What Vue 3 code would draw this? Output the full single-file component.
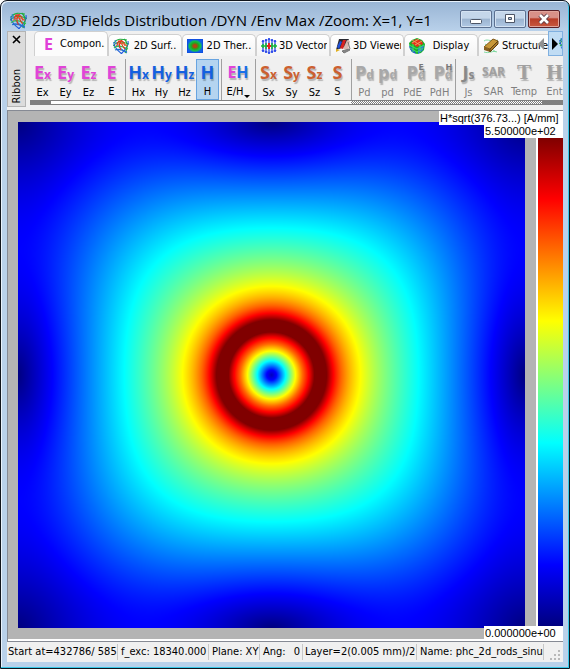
<template>
  <div class="window">
    <header class="title-bar">
      <MeshIcon class="app-icon" />
      <h1 class="title">2D/3D Fields Distribution /DYN /Env Max /Zoom: X=1, Y=1</h1>
      <div class="window-buttons">
        <button type="button" class="window-button" aria-label="Minimize">
          <svg width="14" height="14" viewBox="0 0 14 14"><rect x="1.5" y="7.5" width="11" height="4" rx="1" fill="#fff" stroke="#4c5566" /></svg>
        </button>
        <button type="button" class="window-button" aria-label="Maximize">
          <svg width="14" height="14" viewBox="0 0 14 14"><path d="M2.500 2.500h9v8h-9z M5.500 5.500v2h3v-2z" fill="#fff" fill-rule="evenodd" stroke="#4c5566" /></svg>
        </button>
        <button type="button" class="window-button close" aria-label="Close">
          <svg width="14" height="14" viewBox="0 0 14 14"><path d="M3 3l8 8M11 3l-8 8" stroke="#5b3a44" stroke-width="4.500" /><path d="M3 3l8 8M11 3l-8 8" stroke="#fff" stroke-width="2.600" /></svg>
        </button>
      </div>
    </header>

    <main class="client">
      <section class="ribbon">
        <div class="ribbon-grip">
          <button type="button" class="ribbon-close" aria-label="Close ribbon">
            <svg width="9" height="9" viewBox="0 0 9 9"><path d="M1 1l7 7M8 1l-7 7" stroke="#000" stroke-width="1.600" /></svg>
          </button>
          <span class="ribbon-name">Ribbon</span>
        </div>
        <div class="ribbon-body">
          <nav class="tabs">
            <button
              v-for="tab in tabs"
              :key="tab.label"
              type="button"
              class="tab"
              :class="{ active: activeTab === tab.id }"
              @click="activeTab = tab.id"
            >
              <span v-if="tab.id === 'components'" class="tab-letter">E</span>
              <MeshIcon v-else-if="tab.id === 'surface'" class="tab-icon" />
              <svg v-else-if="tab.id === 'thermal'" class="tab-icon" viewBox="0 0 16 16">
                <defs>
                  <radialGradient id="heat">
                    <stop offset="0" stop-color="#d83018" />
                    <stop offset="0.25" stop-color="#a05010" />
                    <stop offset="0.5" stop-color="#20a820" />
                    <stop offset="0.75" stop-color="#10c050" />
                    <stop offset="1" stop-color="#1060e8" />
                  </radialGradient>
                </defs>
                <rect x="0.500" y="1.500" width="15" height="13" fill="url(#heat)" stroke="#1050e0" />
              </svg>
              <svg v-else-if="tab.id === 'vector'" class="tab-icon" viewBox="0 0 16 16">
                <path d="M2 3v10M5 2v12M8 1v14M11 2v12M14 3v10" stroke="#1838e8" stroke-width="1.200" />
                <path d="M1 4l1-2 1 2M4 3l1-2 1 2M7 2l1-2 1 2M10 3l1-2 1 2M13 4l1-2 1 2M1 12l1 2 1-2M4 13l1 2 1-2M7 14l1 2 1-2M10 13l1 2 1-2M13 12l1 2 1-2" fill="none" stroke="#1838e8" />
                <path d="M0 8h16M2 6v4M5 5v6M11 5v6M14 6v4" stroke="#18b838" stroke-width="1.500" />
                <path d="M8 5v6M6 8h4" stroke="#e82020" stroke-width="2" />
              </svg>
              <svg v-else-if="tab.id === 'viewer'" class="tab-icon" viewBox="0 0 16 16">
                <path d="M4 1L14 1L10 9L1 12z" fill="#282830" />
                <path d="M2 9l3-6 2 1-3 7z" fill="#2050d8" />
                <path d="M5 10l3-8 3 0-3 9z" fill="#d82020" />
                <path d="M8 11l4-9 3 1-2 9z" fill="#d8b8b0" />
                <path d="M1 11l4 1-4 2z" fill="#e0b020" />
                <path d="M7 13l7-2 1 1-6 3zM13 4l2 7" fill="#888" stroke="#777" />
              </svg>
              <svg v-else-if="tab.id === 'display'" class="tab-icon" viewBox="0 0 16 16">
                <path d="M0 5l3-3 5-2 5 2 3 4-1 6-3 3-4 1-5-2-2-3z" fill="#18b028" />
                <path d="M0 8l4 2 3 6-4-2-2-3z" fill="#2058d8" />
                <path d="M9 10l6-3-1 5-5 4z" fill="#2878e0" />
                <path d="M2 5l5-4 6 2 1 3-6 3z" fill="#e83018" />
                <path d="M0 7l8 4 7-4M1 10l7 4 6-4M4 6v8M11 6v8" fill="none" stroke="#40e060" />
                <path d="M3 5l7-4M6 7l7-4M3 2l8 5" stroke="#e8a060" fill="none" />
              </svg>
              <svg v-else class="tab-icon" viewBox="0 0 16 16">
                <path d="M1 3c4-3 8 2 14-1M1 14c5 2 9-2 13 0M2 6l11 8" fill="none" stroke="#80d8a0" />
                <path d="M1 9L10 1l5 2-8 8z" fill="#c89838" stroke="#805818" />
                <path d="M1 9l6 2v3l-6-2z" fill="#886020" />
                <path d="M7 11l8-8v3l-8 8z" fill="#a87828" stroke="#604010" />
              </svg>
              <span class="tab-label">{{ tab.label }}</span>
            </button>
            <div class="tab-scroll">
              <button type="button" class="scroll-left" aria-label="Scroll tabs left">
                <svg width="6" height="12" viewBox="0 0 6 12"><path d="M6 0v12L0 6z" fill="#909090" /></svg>
              </button>
              <button type="button" class="scroll-right" aria-label="Scroll tabs right">
                <svg class="arrow" width="6" height="12" viewBox="0 0 6 12"><path d="M0 0v12l6-6z" fill="#000" /></svg>
                <MeshIcon class="cut-icon" />
              </button>
            </div>
          </nav>

          <div class="tools">
            <div v-for="(group, index) in groups" :key="index" class="tool-group">
              <button
                v-for="tool in group"
                :key="tool.label"
                type="button"
                class="tool"
                :class="[tool.tone, tool.size, { selected: selected === tool.label }]"
                :disabled="tool.disabled"
                @click="selected = tool.label"
              >
                <span class="glyph">
                  <span>{{ tool.big }}</span><span v-if="tool.second" class="second">{{ tool.second }}</span><span v-if="tool.small" class="small">{{ tool.small }}</span><sup v-if="tool.top">{{ tool.top }}</sup>
                </span>
                <span class="tool-label">{{ tool.label }}<i v-if="tool.menu" class="menu-arrow"></i></span>
              </button>
            </div>
          </div>
          <div class="ribbon-scroll"><span class="thumb"></span><span class="track"></span><span class="hatch"></span><span class="end"></span></div>
        </div>
      </section>

      <section class="plot">
        <canvas ref="canvas" class="field" width="507" height="506"></canvas>
        <div class="legend">
          <div class="color-bar"></div>
        </div>
        <div class="plot-label quantity">H*sqrt(376.73...) [A/mm]</div>
        <div class="plot-label max">5.500000e+02</div>
        <div class="plot-label min">0.000000e+00</div>
      </section>

      <footer class="status">
        <span class="pane start">Start at=432786/ 585</span>
        <span class="pane freq">f_exc: 18340.000</span>
        <span class="pane plane">Plane: XY</span>
        <span class="pane angle"><span>Ang:</span><span>0</span></span>
        <span class="pane layer">Layer=2(0.005 mm)/2</span>
        <span class="pane name">Name: phc_2d_rods_sinus</span>
        <svg class="size-grip" width="10" height="10" viewBox="0 0 10 10">
          <path d="M8 0h2v2h-2zM4 4h2v2h-2zM8 4h2v2h-2zM0 8h2v2h-2zM4 8h2v2h-2zM8 8h2v2h-2z" fill="#b8b8b8" />
        </svg>
      </footer>
    </main>
  </div>
</template>

<script setup>
import { ref, h, onMounted } from 'vue';

const canvas = ref(null);
const activeTab = ref('components');
const selected = ref('H');

const tabs = [
  { id: 'components', label: 'Compon..' },
  { id: 'surface', label: '2D Surf..' },
  { id: 'thermal', label: '2D Ther..' },
  { id: 'vector', label: '3D Vector' },
  { id: 'viewer', label: '3D Viewer' },
  { id: 'display', label: 'Display' },
  { id: 'structure', label: 'Structure' }
];

const groups = [
  [
    { label: 'Ex', big: 'E', small: 'x', tone: 'pink' },
    { label: 'Ey', big: 'E', small: 'y', tone: 'pink' },
    { label: 'Ez', big: 'E', small: 'z', tone: 'pink' },
    { label: 'E', big: 'E', tone: 'pink' }
  ],
  [
    { label: 'Hx', big: 'H', small: 'x', tone: 'blue' },
    { label: 'Hy', big: 'H', small: 'y', tone: 'blue' },
    { label: 'Hz', big: 'H', small: 'z', tone: 'blue' },
    { label: 'H', big: 'H', tone: 'blue' }
  ],
  [{ label: 'E/H', big: 'E', second: 'H', tone: 'pink', size: 'pair', menu: true }],
  [
    { label: 'Sx', big: 'S', small: 'x', tone: 'orange' },
    { label: 'Sy', big: 'S', small: 'y', tone: 'orange' },
    { label: 'Sz', big: 'S', small: 'z', tone: 'orange' },
    { label: 'S', big: 'S', tone: 'orange' }
  ],
  [
    { label: 'Pd', big: 'P', small: 'd', tone: 'gray', disabled: true },
    { label: 'pd', big: 'p', small: 'd', tone: 'gray', disabled: true },
    { label: 'PdE', big: 'P', small: 'd', top: 'E', tone: 'gray', size: 'wide', disabled: true },
    { label: 'PdH', big: 'P', small: 'd', top: 'H', tone: 'gray', size: 'wide', disabled: true }
  ],
  [
    { label: 'Js', big: 'J', small: 's', tone: 'dark', disabled: true },
    { label: 'SAR', big: 'SAR', tone: 'sar', size: 'wide', disabled: true },
    { label: 'Temp', big: 'T', tone: 'serif', size: 'wider', disabled: true },
    { label: 'Ent', big: 'H', tone: 'serif', size: 'wide', disabled: true }
  ]
];

// wireframe surface used for the window and for some tabs
const meshLines = [
  ['M1 5C4 0 9 1 14 2', '#20b040'],
  ['M0 8C5 2 10 4 16 6', '#30a838'],
  ['M2 2C3 7 9 12 14 15', '#3080d0'],
  ['M1 4C0 9 5 13 9 16', '#2060d8'],
  ['M15 3C16 8 12 12 8 16', '#2058e0'],
  ['M11 1C16 5 14 12 12 15', '#20a840'],
  ['M1 10C5 6 11 9 15 11', '#30c050'],
  ['M2 12C6 10 9 12 14 14', '#2070d0'],
  ['M4 6C6 1 11 2 12 8', '#e03818'],
  ['M5 3C9 3 9 9 12 11', '#e03818'],
  ['M3 8C6 4 11 5 14 8', '#e06030'],
  ['M9 2C5 6 6 9 8 12', '#e03818']
];
const MeshIcon = () => h(
  'svg',
  { viewBox: '0 0 16 16' },
  meshLines.map(([d, stroke]) => h('path', { d, stroke, fill: 'none', 'stroke-width': 1.1 }))
);

// field level against distance from the axis, inside the rod
const core = [[0, 0.06], [5, 0.13], [14, 0.37], [24, 0.625], [31, 0.77], [38, 0.89], [43, 1], [49, 1.06], [55, 1], [62, 0.88], [70, 0.78], [80, 0.69]];

const coreLevel = (r) => {
  for (let i = 1; i < core.length; i++) {
    const [r0, v0] = core[i - 1];
    const [r1, v1] = core[i];
    if (r <= r1) return v0 + (v1 - v0) * (r - r0) / (r1 - r0);
  }
  return 0.69;
};

// field outside the rod, x and y in half periods
const outerLevel = (x, y) => {
  const r = Math.hypot(x, y);
  const a = Math.atan2(y, x);
  const r3 = 0.2 * r ** 3;
  const r7 = 0.0144 * r ** 7;
  const sx = Math.sin(Math.PI * x);
  const sy = Math.sin(Math.PI * y);
  const cx = Math.cos(Math.PI * x);
  const cy = Math.cos(Math.PI * y);
  const fx = 0.195 * (x / r / r - 0.785 * x - r3 * Math.cos(3 * a) - r7 * Math.cos(7 * a));
  const fy = 0.195 * (y / r / r - 0.785 * y + r3 * Math.sin(3 * a) + r7 * Math.sin(7 * a));
  return Math.hypot(fx + 0.1055 * sx + 0.0345 * sx * cy, fy + 0.1055 * sy + 0.0345 * sy * cx);
};

const channel = (v) => 255 * Math.min(1, Math.max(0, v));
const jet = (v) => [
  channel(Math.min(4 * v - 1.5, 4.5 - 4 * v)),
  channel(Math.min(4 * v - 0.5, 3.5 - 4 * v)),
  channel(Math.min(4 * v + 0.5, 2.5 - 4 * v))
];

onMounted(() => {
  const { width, height } = canvas.value;
  const ctx = canvas.value.getContext('2d');
  const image = ctx.createImageData(width, height);
  for (let j = 0; j < height; j++) {
    for (let i = 0; i < width; i++) {
      const dx = i - (width - 1) / 2;
      const dy = j - (height - 1) / 2;
      const r = Math.hypot(dx, dy);
      const mix = Math.min(1, Math.max(0, (r - 56) / 22));
      let level = 0;
      if (mix < 1) level += (1 - mix) * coreLevel(r);
      if (mix > 0) level += mix * outerLevel(dx * 2 / width, dy * 2 / height);
      const [red, green, blue] = jet(Math.min(1, level));
      const p = (j * width + i) * 4;
      image.data[p] = red;
      image.data[p + 1] = green;
      image.data[p + 2] = blue;
      image.data[p + 3] = 255;
    }
  }
  ctx.putImageData(image, 0, 0);
});
</script>

<style>
body {
  background: #fff;
}
</style>

<style scoped>
.window {
  box-sizing: border-box;
  min-height: 100vh;
  display: flex;
  flex-direction: column;
  padding: 0 6px 6px;
  border: 1px solid #10141c;
  border-radius: 7px 7px 0 0;
  background: linear-gradient(#98b4d4, #b9d1ea 30px, #b9d1ea);
  box-shadow: inset -1px -1px 0 #38c8e8, inset 1px 1px 0 #e8f2fc;
  overflow: hidden;
  font-family: "DejaVu Sans Condensed", "Noto Sans", sans-serif;
  font-size: 11px;
  color: #000;
}

button {
  font: inherit;
  color: inherit;
  padding: 0;
  border: 0;
  background: none;
}

.title-bar {
  display: flex;
  align-items: center;
  height: 30px;
  padding: 0 3px;
}

.app-icon {
  width: 17px;
  height: 17px;
  margin-top: 8px;
}

.title {
  flex: 1;
  min-width: 0;
  margin: 8px 0 0 5px;
  font-family: "Open Sans", "Noto Sans", sans-serif;
  font-size: 15px;
  font-weight: 400;
  line-height: 20px;
  white-space: nowrap;
}

.window-buttons {
  display: flex;
  gap: 2px;
  margin-top: 6px;
}

.window-button {
  display: flex;
  align-items: center;
  justify-content: center;
  box-sizing: border-box;
  width: 32px;
  height: 18px;
  border: 1px solid #5c7090;
  border-radius: 2px;
  background: linear-gradient(#c4d6ea 45%, #9cb4d0 50%, #b0c8e4);
  box-shadow: inset 0 0 0 1px #d4e2f2;
}

.window-button.close {
  border-color: #5a2028;
  background: linear-gradient(#d89088 40%, #b83c28 50%, #c85840);
  box-shadow: inset 0 0 0 1px #e0a49c;
}

.client {
  flex: 1;
  display: flex;
  flex-direction: column;
  background: #f0f0f0;
}

.ribbon {
  display: flex;
  gap: 4px;
  height: 76px;
  margin-bottom: 3px;
}

.ribbon-grip {
  box-sizing: border-box;
  display: flex;
  flex-direction: column;
  align-items: center;
  justify-content: space-between;
  width: 19px;
  padding: 3px 0 2px;
  border: 1px solid #b4b4b4;
  background: #dcdcdc;
}

.ribbon-close {
  display: flex;
}

.ribbon-name {
  writing-mode: vertical-rl;
  transform: rotate(180deg);
  line-height: 14px;
}

.ribbon-body {
  flex: 1;
  min-width: 0;
  overflow: hidden;
}

.tabs {
  position: relative;
  display: flex;
  align-items: flex-end;
  height: 25px;
  padding-left: 4px;
  overflow: hidden;
}

.tab {
  box-sizing: border-box;
  display: flex;
  flex: 0 0 74px;
  align-items: center;
  height: 22px;
  padding-left: 4px;
  border: 1px solid #d0d0d0;
  border-bottom: 0;
  border-radius: 5px 5px 0 0;
  background: linear-gradient(#fff, #f4f4f4);
  overflow: hidden;
}

.tab.active {
  height: 25px;
  background: #fcfcfc;
}

.tab-icon {
  flex: none;
  width: 16px;
  height: 16px;
}

.tab-letter {
  width: 19px;
  flex: none;
  font: bold 16px/18px "Open Sans", sans-serif;
  text-align: center;
  color: #e040d8;
}

.tab-label {
  flex: 1;
  margin: 0 2px;
  line-height: 16px;
  white-space: nowrap;
  overflow: hidden;
}

.tab-scroll {
  position: absolute;
  right: 0;
  top: 0;
  display: flex;
  height: 25px;
}

.scroll-left {
  display: flex;
  align-items: center;
  width: 10px;
}

.scroll-right {
  display: flex;
  align-items: center;
  gap: 1px;
  box-sizing: border-box;
  width: 15px;
  padding-left: 3px;
  border: 1px solid #80b0e0;
  background: #c0dcf4;
  overflow: hidden;
}

.arrow {
  flex: none;
}

.cut-icon {
  flex: none;
  width: 16px;
}

.tools {
  display: flex;
  height: 44px;
}

.tool-group {
  flex: none;
  display: flex;
  margin-top: 3px;
  height: 41px;
  padding: 0 2px 0 1px;
}

.tool-group + .tool-group {
  border-left: 1px solid #a0a0a0;
}

.tool {
  display: flex;
  flex-direction: column;
  align-items: center;
  box-sizing: border-box;
  width: 23px;
  height: 41px;
  padding-top: 2px;
  border: 1px solid transparent;
}

.tool.wide {
  width: 27px;
}

.tool.pair {
  width: 30px;
}

.tool.wider {
  width: 34px;
}

.tool.selected {
  border-color: #68a4e0;
  background: #b4d4f0;
}

.glyph {
  display: flex;
  align-items: baseline;
  height: 23px;
  font: bold 18px/20px "Open Sans", sans-serif;
  text-shadow: 1px 2px 1px rgba(0, 0, 0, 0.25);
}

.glyph .small {
  font-size: 12px;
}

.glyph sup {
  align-self: flex-start;
  width: 0;
  margin-left: -7px;
  font-size: 9px;
  line-height: 10px;
  color: #777;
}

.glyph .second {
  color: #1870e8;
}

.tool-label {
  display: flex;
  align-items: flex-end;
  line-height: 15px;
}

.tool:disabled .tool-label {
  color: #808080;
}

.menu-arrow {
  margin-bottom: 1px;
  border: 3px solid transparent;
  border-top-color: #000;
  border-bottom: 0;
}

.pink .glyph {
  color: #e044d8;
}

.blue .glyph {
  color: #1460e0;
}

.pair .glyph {
  font-size: 16px;
}

.orange .glyph {
  color: #cc6030;
}

.gray .glyph {
  color: #a8a8a8;
}

.dark .glyph {
  color: #888;
}

.sar .glyph {
  font-size: 12px;
  color: #a0a0a0;
}

.serif .glyph {
  font: bold 21px/20px "Liberation Serif", serif;
  color: #a0a0a0;
}

.ribbon-scroll {
  display: flex;
  height: 5px;
}

.ribbon-scroll span {
  box-sizing: border-box;
  border-top: 1px solid #808080;
  border-bottom: 1px solid #808080;
  background: #fff;
}

.ribbon-scroll .thumb {
  width: 21px;
  background: #808080;
}

.ribbon-scroll .track {
  flex: 300;
}

.ribbon-scroll .hatch {
  flex: 191;
  background: repeating-conic-gradient(#808080 0 25%, #fff 0 50%) 0 0 / 2px 2px;
}

.ribbon-scroll .end {
  width: 21px;
  background: #808080;
}

.plot {
  position: relative;
  display: flex;
  box-sizing: border-box;
  border: 1px solid #868a94;
  border-right: 0;
  background: #b4b4b4;
  box-shadow: inset 0 -2px 0 #fff;
}

.field {
  flex: 1;
  min-width: 0;
  aspect-ratio: 507 / 506;
  margin: 11px 11px 13px 10px;
}

.legend {
  display: flex;
  box-sizing: border-box;
  width: 27px;
  padding: 27px 0 15px 2px;
  background: #fff;
}

.color-bar {
  flex: 1;
  background: linear-gradient(#800000, #f00 12.5%, #ff0 37.5%, #0ff 62.5%, #00f 87.5%, #000080);
}

.plot-label {
  position: absolute;
  right: 0;
  box-sizing: border-box;
  height: 14px;
  padding-left: 1px;
  background: #fff;
  font: 11px/14px "Liberation Sans", Arial, sans-serif;
  white-space: nowrap;
}

.quantity {
  top: 0;
  width: 124px;
}

.max {
  top: 13px;
  width: 79px;
}

.min {
  bottom: 1px;
  width: 79px;
}

.status {
  flex: 1;
  display: flex;
  align-items: center;
  min-height: 19px;
}

.pane {
  box-sizing: border-box;
  flex: none;
  padding-left: 3px;
  border-right: 1px solid #c8c8c8;
  line-height: 16px;
  white-space: nowrap;
  overflow: hidden;
}

.start {
  width: 111px;
  padding-left: 1px;
}

.freq {
  width: 91px;
}

.plane {
  width: 51px;
}

.angle {
  display: flex;
  justify-content: space-between;
  width: 43px;
  padding-right: 2px;
}

.layer {
  width: 114px;
  padding-left: 2px;
}

.name {
  flex: 1;
  min-width: 0;
}

.size-grip {
  flex: none;
  align-self: flex-end;
  margin: 0 3px 2px 6px;
}
</style>
